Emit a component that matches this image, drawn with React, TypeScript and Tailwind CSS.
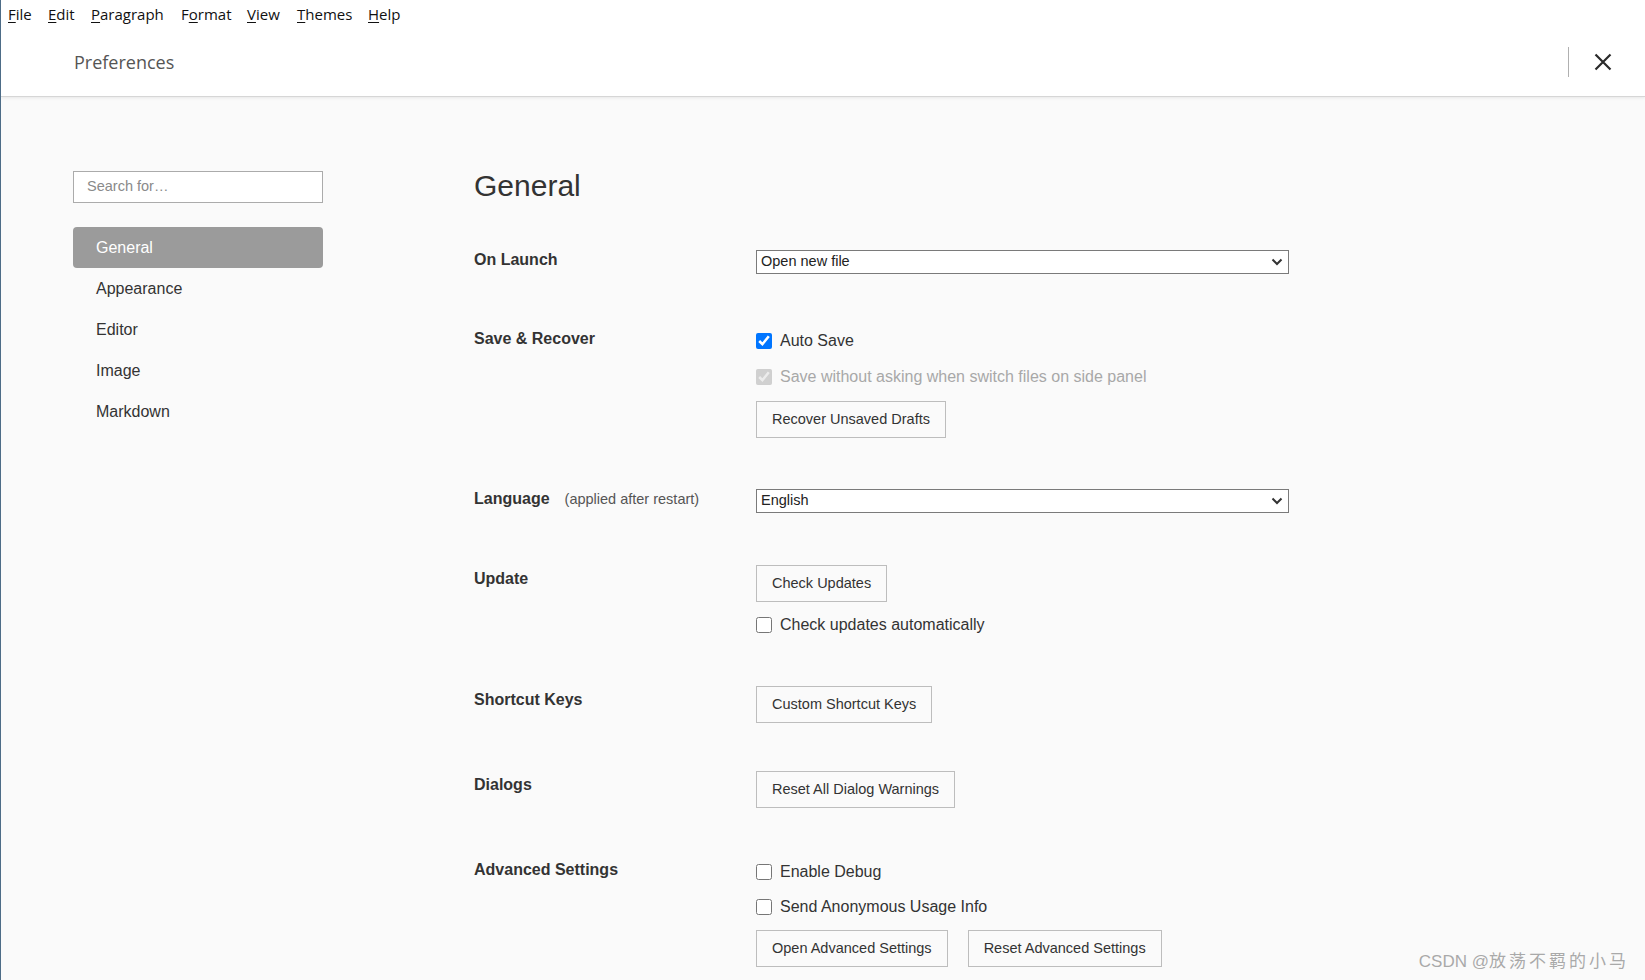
import type { ReactNode } from 'react';

const menu = [
  { key: 'F', rest: 'ile', w: 'w-[40px]' },
  { key: 'E', rest: 'dit', w: 'w-[43px]' },
  { key: 'P', rest: 'aragraph', w: 'w-[90px]' },
  { key: 'Format', rest: '', w: 'w-[66px]' },
  { key: 'V', rest: 'iew', w: 'w-[50px]' },
  { key: 'T', rest: 'hemes', w: 'w-[71px]' },
  { key: 'H', rest: 'elp', w: 'w-[40px]' },
];

const navItems = ['General', 'Appearance', 'Editor', 'Image', 'Markdown'];

function MenuItem({ k, rest, w }: { k: string; rest: string; w: string }) {
  if (k === 'Format') {
    return (
      <span className={w}>
        F<span className="underline underline-offset-2">o</span>rmat
      </span>
    );
  }
  return (
    <span className={w}>
      <span className="underline underline-offset-2">{k}</span>
      {rest}
    </span>
  );
}

function Section({
  label,
  labelPad = 'pt-0',
  gap = 'gap-[12px]',
  mt,
  children,
}: {
  label: ReactNode;
  labelPad?: string;
  gap?: string;
  mt: string;
  children: ReactNode;
}) {
  return (
    <div className={`grid grid-cols-[282px_1fr] ${mt}`}>
      <div className={`${labelPad} leading-5`}>{label}</div>
      <div className={`flex flex-col items-start ${gap}`}>{children}</div>
    </div>
  );
}

function Select({ value }: { value: string }) {
  return (
    <div className="flex h-6 w-[533px] items-center justify-between border border-[#7a7a7a] bg-white pl-[4px] pr-[5px] text-[14.5px] text-[#222]">
      <span>{value}</span>
      <svg width="12" height="8" viewBox="0 0 12 8" fill="none">
        <path d="M1.5 1.5 6 6l4.5-4.5" stroke="#333" strokeWidth="2" />
      </svg>
    </div>
  );
}

function Button({ children }: { children: ReactNode }) {
  return (
    <button
      type="button"
      className="h-[37px] border border-[#bdbdbd] bg-transparent px-[15px] text-[14.5px] text-[#333]"
    >
      {children}
    </button>
  );
}

function Check({
  label,
  checked = false,
  disabled = false,
}: {
  label: string;
  checked?: boolean;
  disabled?: boolean;
}) {
  return (
    <label className="flex h-6 items-center gap-2">
      <input
        type="checkbox"
        defaultChecked={checked}
        disabled={disabled}
        className="m-0 h-4 w-4 accent-[#0075ff]"
      />
      <span className={`text-[16px] ${disabled ? 'text-[#a8a8a8]' : 'text-[#333]'}`}>{label}</span>
    </label>
  );
}

export default function App() {
  return (
    <div className="relative flex h-[980px] w-full flex-col overflow-hidden border-l border-[#4d6c87] bg-[#fafafa] font-['Liberation_Sans',Arial,sans-serif]">
      <header className="h-[97px] border-b border-[#d6d6d6] bg-white shadow-[0_1px_3px_rgba(0,0,0,0.08)]">
        <nav className="flex h-[28px] items-center pl-[7px] font-['Open_Sans',sans-serif] text-[15px] text-[#111]">
          {menu.map(m => (
            <MenuItem key={m.key} k={m.key} rest={m.rest} w={m.w} />
          ))}
        </nav>
        <div className="flex h-[68px] items-center pr-[33px]">
          <h1 className="flex-1 pl-[73px] font-['Open_Sans',sans-serif] text-[18px] text-[#555]">
            Preferences
          </h1>
          <div className="h-[30px] w-px bg-[#b0b0b0]" />
          <svg className="ml-[25px]" width="18" height="18" viewBox="0 0 18 18">
            <path d="M1.5 1.5 16.5 16.5M16.5 1.5 1.5 16.5" stroke="#2a2a2a" strokeWidth="2.2" />
          </svg>
        </div>
      </header>

      <div className="flex flex-1">
        <aside className="w-[473px] shrink-0 pl-[72px] pt-[74px]">
          <div className="flex h-[32px] w-[250px] items-center border border-[#ababab] bg-white pl-[13px] text-[14.5px] text-[#8a8a8a]">
            Search for…
          </div>
          <ul className="mt-[24px] w-[250px]">
            {navItems.map((item, i) => (
              <li
                key={item}
                className={`flex h-[41px] items-center pl-[23px] text-[16px] ${
                  i === 0 ? 'rounded-[4px] bg-[#9b9b9b] text-white' : 'text-[#333]'
                }`}
              >
                {item}
              </li>
            ))}
          </ul>
        </aside>

        <main className="flex-1 pt-[72px] text-[#333]">
          <h2 className="h-[34px] text-[30px] leading-[34px] text-[#333]">General</h2>

          <Section mt="mt-[47px]" label={<b className="text-[16px]">On Launch</b>}>
            <Select value="Open new file" />
          </Section>

          <Section mt="mt-[55px]" label={<b className="text-[16px]">Save &amp; Recover</b>}>
            <Check label="Auto Save" checked />
            <Check label="Save without asking when switch files on side panel" checked disabled />
            <Button>Recover Unsaved Drafts</Button>
          </Section>

          <Section
            mt="mt-[51px]"
            label={
              <span>
                <b className="text-[16px]">Language</b>
                <span className="ml-[15px] text-[14.5px] text-[#555]">(applied after restart)</span>
              </span>
            }
          >
            <Select value="English" />
          </Section>

          <Section mt="mt-[52px]" labelPad="pt-1" gap="gap-[11px]" label={<b className="text-[16px]">Update</b>}>
            <Button>Check Updates</Button>
            <Check label="Check updates automatically" />
          </Section>

          <Section mt="mt-[49px]" labelPad="pt-1" label={<b className="text-[16px]">Shortcut Keys</b>}>
            <Button>Custom Shortcut Keys</Button>
          </Section>

          <Section mt="mt-[48px]" labelPad="pt-1" label={<b className="text-[16px]">Dialogs</b>}>
            <Button>Reset All Dialog Warnings</Button>
          </Section>

          <Section mt="mt-[52px]" gap="gap-[11px]" label={<b className="text-[16px]">Advanced Settings</b>}>
            <Check label="Enable Debug" />
            <Check label="Send Anonymous Usage Info" />
            <div className="flex gap-[20px]">
              <Button>Open Advanced Settings</Button>
              <Button>Reset Advanced Settings</Button>
            </div>
          </Section>
        </main>
      </div>

      <div className="absolute right-[16px] top-[949px] font-['Liberation_Sans','Noto_Sans_CJK_SC',sans-serif] text-[17px] text-[#a9a9a9] [text-shadow:0_0_1px_rgba(255,255,255,0.9)]">
        CSDN @<span className="tracking-[3px]">放荡不羁的小马</span>
      </div>
    </div>
  );
}
